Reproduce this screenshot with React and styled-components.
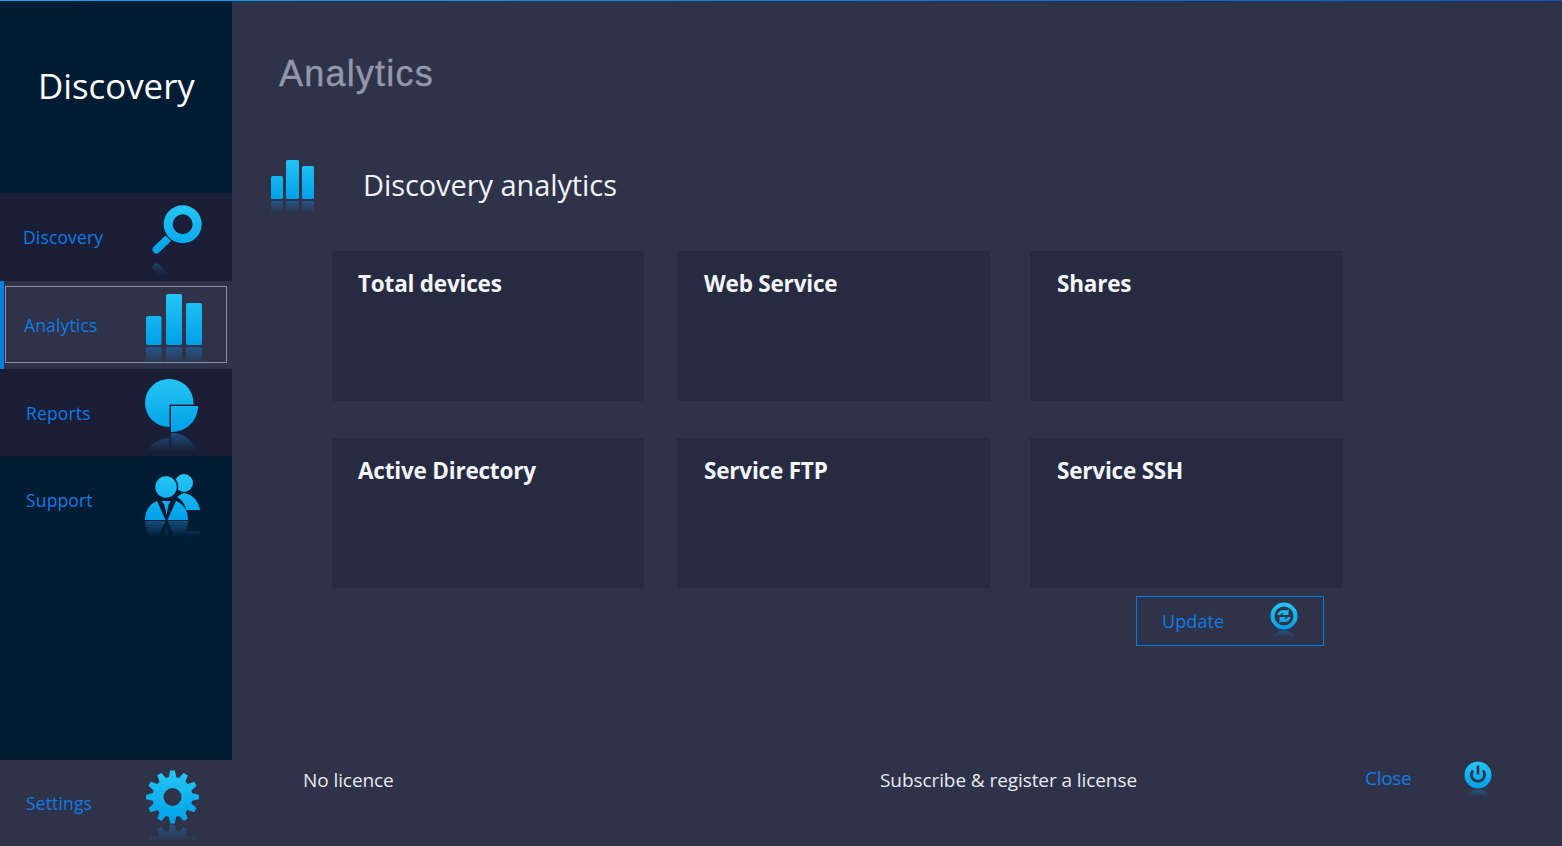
import React, { useId } from 'react';
import styled, { createGlobalStyle } from 'styled-components';

const GlobalStyle = createGlobalStyle`
  html, body {
    margin: 0;
    padding: 0;
    height: 100%;
    background: #2f3349;
    overflow: hidden;
    font-family: "Open Sans", "Noto Sans", sans-serif;
  }
`;

const Page = styled.div`
  display: flex;
  width: 1562px;
  height: 846px;
  background: #2f3349;
  border-top: 1px solid;
  border-image: linear-gradient(90deg, #0fa8f0, #0b55cf) 1;
  box-sizing: border-box;
`;

const Sidebar = styled.aside`
  display: flex;
  flex-direction: column;
  width: 232px;
  flex: none;
`;

const Brand = styled.div`
  height: 192px;
  padding: 62px 0 0 38px;
  box-sizing: border-box;
  background: #021c33;
  color: #fff;
  font-size: 34.8px;
  line-height: 46px;
`;

const NavList = styled.nav`
  flex: 1;
  background: #021c33;
`;

const NavRow = styled.div`
  display: grid;
  grid-template-columns: 144px 64px;
  align-items: center;
  position: relative;
  height: ${({ $height }) => $height}px;
  background: ${({ $bg }) => $bg};
  ${({ $active }) => $active && `
    border-left: 4px solid #0b7fe0;
    grid-template-columns: 140px 64px;
  `}
`;

const ActiveFrame = styled.span`
  position: absolute;
  left: 1px;
  top: 5px;
  width: 222px;
  height: 77px;
  box-sizing: border-box;
  border: 1px solid #8b8fa8;
`;

const NavLabel = styled.span`
  padding-left: ${({ $left }) => $left}px;
  color: #0f7be6;
  font-size: 17.5px;
  letter-spacing: 0.15px;
`;

const IconSvg = styled.svg`
  display: block;
  position: relative;
`;

const Main = styled.main`
  flex: 1;
  display: flex;
  flex-direction: column;
`;

const PageTitle = styled.h1`
  margin: 0;
  padding: 49px 0 0 47px;
  color: #9497ab;
  font-family: "Liberation Sans", Arial, sans-serif;
  font-size: 36px;
  font-weight: 400;
  letter-spacing: 1.2px;
  line-height: 48px;
  -webkit-text-stroke: 0.4px #9497ab;
`;

const Section = styled.div`
  display: flex;
  align-items: center;
  height: 64px;
  margin: 55px 0 0 38px;
`;

const SectionTitle = styled.h2`
  margin: 0 0 2px 45px;
  color: #f1f2f6;
  font-size: 29px;
  font-weight: 400;
  letter-spacing: -0.08px;
`;

const CardGrid = styled.div`
  display: grid;
  grid-template-columns: 345px 353px 313px;
  grid-auto-rows: 150px;
  row-gap: 37px;
  margin: 34px 0 0 100px;
`;

const Card = styled.section`
  width: 313px;
  padding: 16px 27px;
  box-sizing: border-box;
  background: #272b42;
  color: #f4f5f8;
  font-size: 22.5px;
  font-weight: 700;
  letter-spacing: -0.2px;
  line-height: 34px;

  &:nth-child(3n + 1) {
    width: 312px;
    padding-left: 26px;
  }
`;

const UpdateButton = styled.button`
  display: flex;
  align-items: center;
  justify-content: space-between;
  width: 188px;
  height: 50px;
  margin: 8px 0 0 904px;
  padding: 0 23px 0 25px;
  box-sizing: border-box;
  border: 1.5px solid #0b78dc;
  background: transparent;
  color: #0f7be6;
  font: inherit;
  font-size: 18px;
  letter-spacing: 0.1px;
`;

const Footer = styled.footer`
  display: grid;
  grid-template-columns: 577px 485px 99px 40px;
  align-items: center;
  margin-top: auto;
  height: 122px;
  padding: 0 0 11px 71px;
  box-sizing: border-box;
  color: #e8e9ef;
  font-size: 19px;
  letter-spacing: -0.08px;
`;

const FooterLink = styled.span`
  margin-bottom: 3px;
  color: #0f7be6;
  letter-spacing: -0.3px;
`;

// icon body plus its faded reflection, both in page coordinates
const Gloss = ({ box, top, base, depth = 18, gap = 2, children }) => {
  const id = useId();
  const [, , w, h] = box;
  return (
    <IconSvg width={w} height={h} viewBox={box.join(' ')}>
      <defs>
        <linearGradient id={`${id}f`} gradientUnits="userSpaceOnUse" x1="0" x2="0" y1={top} y2={base}>
          <stop offset="0" stopColor="#25c6f5" />
          <stop offset="1" stopColor="#019fe8" />
        </linearGradient>
        <linearGradient id={`${id}r`} gradientUnits="userSpaceOnUse" x1="0" x2="0" y1={base} y2={base - depth}>
          <stop offset="0" stopColor="#1f6fb0" stopOpacity="0.6" />
          <stop offset="1" stopColor="#1f6fb0" stopOpacity="0" />
        </linearGradient>
      </defs>
      <g fill={`url(#${id}r)`} transform={`translate(0 ${2 * base + gap}) scale(1 -1)`}>{children}</g>
      <g fill={`url(#${id}f)`}>{children}</g>
    </IconSvg>
  );
};

const gearPath = (cx, cy, outer, root, hole, teeth) => {
  let d = '';
  const step = (Math.PI * 2) / teeth;
  for (let i = 0; i < teeth; i++) {
    const a = i * step - Math.PI / 2;
    const pts = [
      [root, a - step * 0.36],
      [outer, a - step * 0.17],
      [outer, a + step * 0.17],
      [root, a + step * 0.36],
    ];
    pts.forEach(([r, t], j) => {
      const px = (cx + r * Math.cos(t)).toFixed(2);
      const py = (cy + r * Math.sin(t)).toFixed(2);
      d += `${i === 0 && j === 0 ? 'M' : 'L'}${px} ${py}`;
    });
  }
  d += `Z M${cx - hole} ${cy}a${hole} ${hole} 0 1 0 ${hole * 2} 0a${hole} ${hole} 0 1 0 ${-hole * 2} 0Z`;
  return d;
};

const SearchIcon = () => (
  <Gloss box={[144, 193, 64, 88]} top={205} base={258} depth={16} gap={1}>
    <path fillRule="evenodd" d="M163.7 224.3a19 19 0 1 0 38 0a19 19 0 1 0 -38 0Z M172.7 224.3a10 10 0 1 0 20 0a10 10 0 1 0 -20 0Z" />
    <path d="M165.5 235.5l5.5 5.5l-12 11.6a3.9 3.9 0 0 1 -5.5 -5.5Z" />
  </Gloss>
);

const BarsIcon = () => (
  <Gloss box={[144, 281, 64, 88]} top={294} base={345} depth={18} gap={2}>
    <rect x="146" y="316" width="15.5" height="29" rx="2" />
    <rect x="166" y="294" width="16" height="51" rx="2" />
    <rect x="186" y="303" width="16" height="42" rx="2" />
  </Gloss>
);

const PieIcon = () => (
  <Gloss box={[144, 369, 64, 87]} top={379} base={432} depth={18} gap={1}>
    <path d="M169 379a24 24 0 1 0 0 48c.5 0 .5 0 .5-.5v-22h23.6c.4 0 .4-.6.4-1.5a24 24 0 0 0-24.5-24Z" />
    <path d="M171 406h27c0 14-11 26-27 26Z" />
  </Gloss>
);

const PeopleIcon = () => (
  <Gloss box={[144, 456, 64, 88]} top={474} base={520} depth={16} gap={1}>
    <circle cx="184" cy="483" r="9" />
    <path d="M177 497c3-2 5-3.5 7-4c8 1 15 8 16 17h-14c-1-6-4-10-9-13Z" />
    <circle cx="166" cy="487" r="11.5" stroke="#021c33" strokeWidth="1.5" />
    <path d="M145 520C145 510 150 504 157 501L165.5 520Z" />
    <path d="M188 520C188 510 183 504 176 501L167.5 520Z" />
    <path d="M161.5 501h9l-2 4l-2 10l-2-10Z" />
  </Gloss>
);

const GearIcon = () => (
  <Gloss box={[144, 0, 64, 86]} top={11} base={63} depth={16} gap={2}>
    <path fillRule="evenodd" d={gearPath(172.5, 37, 26.5, 20, 9, 12)} />
  </Gloss>
);

const SyncIcon = () => (
  <Gloss box={[1270, 602, 30, 40]} top={603} base={631} depth={8} gap={0}>
    <path fillRule="evenodd" d="M1270.5 617a13.5 13.5 0 1 0 27 0a13.5 13.5 0 1 0 -27 0Z M1274.5 617a9.5 9.5 0 1 0 19 0a9.5 9.5 0 1 0 -19 0Z" />
    <path d="M1277 616a7.5 7.5 0 0 1 10-4.5l1.5-2v6.5h-6.5l2-2a4 4 0 0 0-4 2Z" />
    <path d="M1291 618a7.5 7.5 0 0 1-10 4.5l-1.5 2v-6.5h6.5l-2 2a4 4 0 0 0 4-2Z" />
  </Gloss>
);

const PowerIcon = () => (
  <Gloss box={[1464, 761, 30, 40]} top={762} base={790} depth={8} gap={0}>
    <path fillRule="evenodd" d="M1464.5 776a13.5 13.5 0 1 0 27 0a13.5 13.5 0 1 0 -27 0Z M1472 770.5a8 8 0 1 0 12 0l-2 2a5.2 5.2 0 1 1-8 0Z M1476.7 766.5v9h2.6v-9Z" />
  </Gloss>
);

const SectionBarsIcon = () => (
  <Gloss box={[270, 160, 48, 54]} top={161} base={201} depth={12} gap={2}>
    <rect x="271" y="178" width="12" height="23" rx="1.5" />
    <rect x="286" y="162" width="13" height="39" rx="1.5" />
    <rect x="302" y="168" width="12" height="33" rx="1.5" />
  </Gloss>
);

const SettingsRow = styled.div`
  display: grid;
  grid-template-columns: 144px 64px;
  align-items: center;
  height: 86px;
`;

const cards = ['Total devices', 'Web Service', 'Shares', 'Active Directory', 'Service FTP', 'Service SSH'];

const App = () => (
  <Page>
    <GlobalStyle />
    <Sidebar>
      <Brand>Discovery</Brand>
      <NavList>
        <NavRow $height={88} $bg="#1a1f37">
          <NavLabel $left={23}>Discovery</NavLabel>
          <SearchIcon />
        </NavRow>
        <NavRow $height={88} $bg="#2f3349" $active>
          <ActiveFrame />
          <NavLabel $left={20}>Analytics</NavLabel>
          <BarsIcon />
        </NavRow>
        <NavRow $height={87} $bg="#1a1f37">
          <NavLabel $left={26}>Reports</NavLabel>
          <PieIcon />
        </NavRow>
        <NavRow $height={88} $bg="transparent">
          <NavLabel $left={26}>Support</NavLabel>
          <PeopleIcon />
        </NavRow>
      </NavList>
      <SettingsRow>
        <NavLabel $left={26}>Settings</NavLabel>
        <GearIcon />
      </SettingsRow>
    </Sidebar>
    <Main>
      <PageTitle>Analytics</PageTitle>
      <Section>
        <SectionBarsIcon />
        <SectionTitle>Discovery analytics</SectionTitle>
      </Section>
      <CardGrid>
        {cards.map((title) => (
          <Card key={title}>{title}</Card>
        ))}
      </CardGrid>
      <UpdateButton>
        Update
        <SyncIcon />
      </UpdateButton>
      <Footer>
        <span>No licence</span>
        <span>Subscribe &amp; register a license</span>
        <FooterLink>Close</FooterLink>
        <PowerIcon />
      </Footer>
    </Main>
  </Page>
);

export default App;
